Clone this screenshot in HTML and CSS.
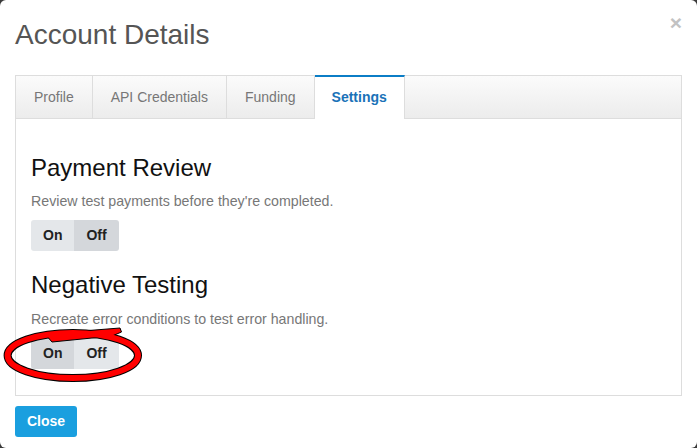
FILE: index.html
```html
<!DOCTYPE html>
<html lang="en">
<head>
    <meta charset="UTF-8">
    <meta name="viewport" content="width=device-width, initial-scale=1.0">
    <title>Account Details</title>
    <link rel="stylesheet" href="styles.css">
</head>
<body>
    <div class="modal">
        <div class="modal-header">
            <h2 class="modal-title">Account Details</h2>
            <button class="close-x" type="button">&times;</button>
        </div>

        <div class="tab-panel">
            <ul class="tabs">
                <li>Profile</li>
                <li>API Credentials</li>
                <li>Funding</li>
                <li class="active">Settings</li>
            </ul>

            <div class="tab-body">
                <div class="setting">
                    <h3>Payment Review</h3>
                    <p>Review test payments before they're completed.</p>
                    <div class="toggle">
                        <span>On</span>
                        <span class="selected">Off</span>
                    </div>
                </div>

                <div class="setting">
                    <h3>Negative Testing</h3>
                    <p>Recreate error conditions to test error handling.</p>
                    <div class="toggle">
                        <span class="selected">On</span>
                        <span>Off</span>
                        <!-- red marker drawn over the toggle -->
                        <svg class="marker" width="150" height="62" viewBox="0 0 150 62">
                            <ellipse cx="72.8" cy="30.5" rx="65.2" ry="22.6" fill="none" stroke="#000" stroke-width="8"/>
                            <path d="M45 9 L120 3 L121.5 7 L112 11 L52 17 Z" fill="#f00" stroke="#000" stroke-width="1"/>
                            <ellipse cx="72.8" cy="30.5" rx="65.2" ry="22.6" fill="none" stroke="#f00" stroke-width="6"/>
                        </svg>
                    </div>
                </div>
            </div>
        </div>

        <div class="modal-footer">
            <button class="btn-close" type="button">Close</button>
        </div>
    </div>
</body>
</html>
```

FILE: styles.css
```css
* {
    margin: 0;
    padding: 0;
    box-sizing: border-box;
}

html {
    background: #3a3a3a;
}

body {
    font-family: "Liberation Sans", Arial, sans-serif;
    font-size: 14px;
    color: #333;
}

.modal {
    background: white;
    width: 697px;
    height: 448px;
    border-radius: 6px;
    padding: 0 15px;
}

.modal-header {
    display: flex;
    justify-content: space-between;
    align-items: flex-start;
    height: 75px;
    padding-top: 20px;
}

.modal-title {
    font-size: 28px;
    font-weight: normal;
    line-height: 1.1;
    color: #555;
}

.close-x {
    background: none;
    border: none;
    font-family: "Liberation Sans", Arial, sans-serif;
    font-size: 21px;
    font-weight: bold;
    line-height: 21px;
    color: #c2c2c2;
    margin-top: -8px;
}

.tab-panel {
    border: 1px solid #ddd;
}

.tabs {
    display: flex;
    list-style: none;
    background: linear-gradient(#fbfbfb, #ececec);
    border-bottom: 1px solid #ddd;
}

.tabs li {
    height: 42px;
    line-height: 42px;
    padding: 0 18px;
    border-right: 1px solid #ddd;
    color: #777;
}

.tabs li.active {
    background: white;
    color: #1a72b8;
    font-weight: bold;
    border-top: 2px solid #0b7dc6;
    height: 44px;
    line-height: 40px;
    margin-top: -1px;
    margin-bottom: -1px;
    padding: 0 17px;
}

.tab-body {
    padding: 36px 15px 26px;
}

.setting + .setting {
    margin-top: 21px;
}

.setting h3 {
    font-size: 24px;
    font-weight: normal;
    line-height: 1.1;
    color: #111;
    margin-bottom: 10px;
}

.setting p {
    font-size: 14.2px;
    line-height: 20px;
    color: #777;
    margin-bottom: 9px;
}

.toggle {
    position: relative;
    display: inline-flex;
    border-radius: 3px;
}

.toggle span {
    height: 31px;
    line-height: 31px;
    padding: 0 12px;
    font-weight: bold;
    color: #222;
    background: #e4e7ea;
}

.toggle span:first-child {
    border-radius: 3px 0 0 3px;
}

.toggle span:nth-child(2) {
    border-radius: 0 3px 3px 0;
}

.toggle span.selected {
    background: #d4d7db;
}

.marker {
    position: absolute;
    left: -31px;
    top: -13px;
}

.modal-footer {
    padding-top: 10px;
}

.btn-close {
    background: #1a9fdf;
    color: white;
    border: none;
    border-radius: 3px;
    font-family: "Liberation Sans", Arial, sans-serif;
    font-size: 14px;
    font-weight: bold;
    height: 31px;
    padding: 0 12px;
}
```
